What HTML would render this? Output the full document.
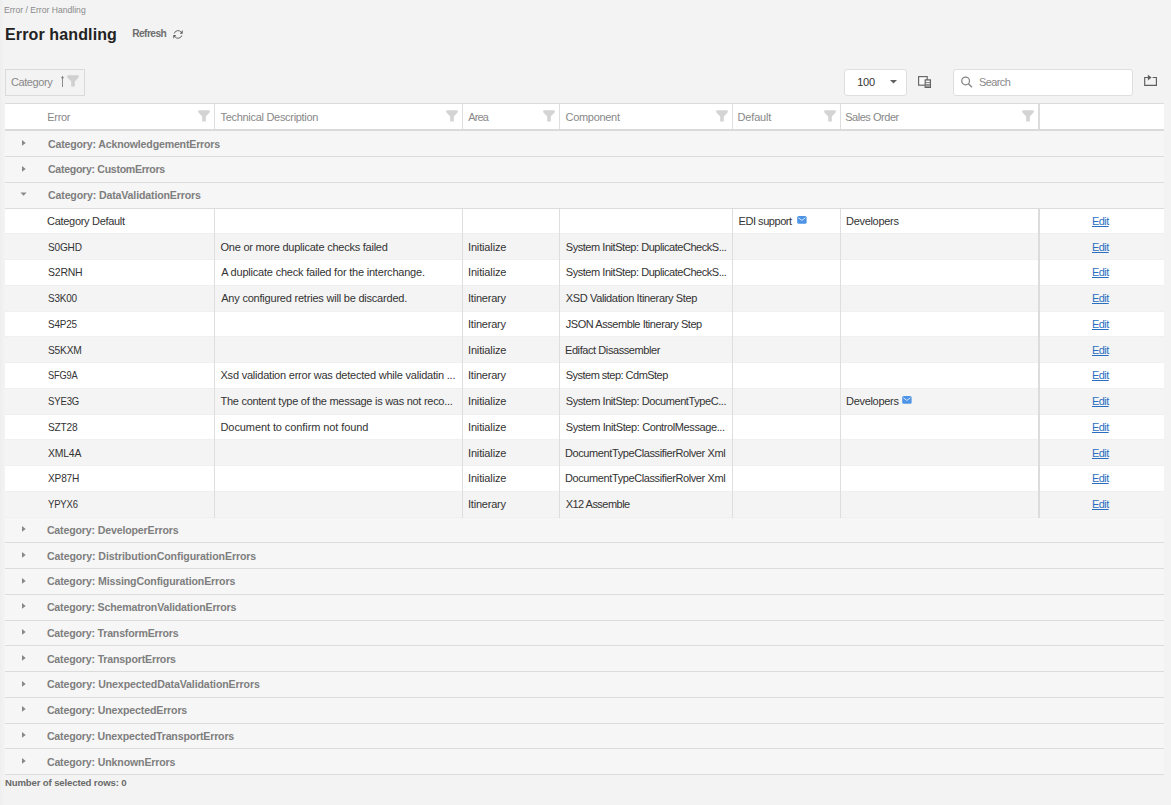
<!DOCTYPE html><html><head><meta charset="utf-8"><title>Error handling</title><style>
*{margin:0;padding:0;box-sizing:border-box}
html,body{width:1171px;height:805px;overflow:hidden;background:#f3f3f3;font-family:"Liberation Sans",sans-serif}
body{position:relative}
.a{position:absolute;white-space:nowrap}
.strip{position:absolute;left:0;top:0;width:4px;height:805px;background:linear-gradient(to right,#ededed 0,#efefef 1px,#f1f1f1 1.5px,#f1f1f1 3px,#f3f3f3 4px)}
.bc{top:4px;font-size:8.6px;color:#8a8a8a;line-height:12px}
.title{top:25px;font-size:16px;font-weight:bold;color:#222;line-height:19px}
.refresh{top:28px;font-size:10.2px;font-weight:bold;color:#6e6e6e;line-height:12px}
.chip{position:absolute;left:5px;top:69px;width:80px;height:27px;border:1px solid #dadada}
.cht{top:76px;font-size:11px;color:#888;line-height:13px}
.dd{position:absolute;left:844px;top:69px;width:63px;height:27px;background:#fff;border:1px solid #dedede;border-radius:3px}
.ddt{top:76px;font-size:11px;color:#333;line-height:12px}
.search{position:absolute;left:953px;top:69px;width:180px;height:27px;background:#fff;border:1px solid #dedede;border-radius:3px}
.st{top:76px;font-size:11px;color:#8a8a8a;line-height:12px}
.fn,.env,.tri{position:absolute}
.hdr{position:absolute;left:5px;top:103px;width:1159px;height:28.25px;background:#fff;border-top:1px solid #dcdcdc;border-bottom:2px solid #dadada}
.vd{position:absolute;background:#dedede;width:1px}
.vd2{position:absolute;background:#dcdcdc;width:2px}
.ht{top:111px;font-size:11px;color:#888;line-height:13px}
.row{position:absolute;left:5px;width:1159px}
.grp{background:#f6f6f6;border-bottom:1px solid #dcdcdc}
.drow{border-bottom:1px solid #f0f0f0}
.gt{font-weight:bold;font-size:10.6px;color:#7e7e7e;line-height:12px}
.dt{font-size:11px;color:#333;line-height:12px}
.edit{font-size:11px;color:#2a6fbf;text-decoration:underline;line-height:12px}
.foot{top:777px;font-size:9.6px;font-weight:bold;color:#6a6a6a;line-height:12px}
</style></head><body>
<div class="strip"></div>
<span class="a bc" style="left:4px;letter-spacing:0px">Error / Error Handling</span>
<span class="a title" style="left:5px;letter-spacing:0.127px">Error handling</span>
<span class="a refresh" style="left:132.2px;letter-spacing:-0.553px">Refresh</span>
<svg class="a" style="left:168px;top:26px" width="20" height="16" viewBox="0 0 20 16"><path d="M6.28 7.44A3.9 3.9 0 0 1 13.2 6.2" stroke="#5c5c5c" stroke-width="0.95" fill="none"/><path d="M14.7 4.1V7.8H11.8Z" fill="#5c5c5c"/><path d="M13.82 9.46A3.9 3.9 0 0 1 6.9 10.6" stroke="#5c5c5c" stroke-width="0.95" fill="none"/><path d="M5.3 9.1H8.1L5.3 12.7Z" fill="#5c5c5c"/></svg>
<div class="chip"></div>
<span class="a cht" style="left:11px;letter-spacing:-0.426px">Category</span>
<svg class="a" style="left:59px;top:74px" width="7" height="14" viewBox="0 0 7 14"><path d="M3.5 3V13" stroke="#808080" stroke-width="0.9"/><path d="M1.9 4.3L3.5 1.8L5.1 4.3Z" fill="#808080"/></svg>
<svg class="fn" style="left:67.2px;top:75.2px" width="12" height="12" viewBox="0 0 12 12"><path d="M0.2 1Q0.2 0.2 1 0.2H11Q11.8 0.2 11.8 1V2.3L7.8 6.6V11.5H4.2V6.6L0.2 2.3Z" fill="#d0d0d0"/></svg>
<div class="dd"></div>
<span class="a ddt" style="left:857.2px;letter-spacing:-0.2px">100</span>
<svg class="a" style="left:890px;top:80px" width="7" height="4" viewBox="0 0 7 4"><path d="M0 0H7L3.5 3.5Z" fill="#606060"/></svg>
<svg class="a" style="left:918px;top:76px" width="14" height="13" viewBox="0 0 14 13"><rect x="0.6" y="0.6" width="8.6" height="8.6" fill="#fbfbfb" stroke="#6a6a6a" stroke-width="1.2"/><rect x="7.2" y="3.9" width="5.2" height="7.5" fill="#f3f3f3" stroke="#606060" stroke-width="1.2"/><path d="M7.6 6.6H12.4M7.6 8.6H12.4" stroke="#7a7a7a" stroke-width="0.9"/><rect x="7.8" y="9" width="4" height="2" fill="#9a9a9a"/></svg>
<div class="search"></div>
<span class="a st" style="left:979px;letter-spacing:-0.6px">Search</span>
<svg class="a" style="left:960px;top:76px" width="13" height="12" viewBox="0 0 13 12"><circle cx="5.6" cy="4.9" r="3.9" stroke="#858585" stroke-width="1.25" fill="none"/><path d="M8.4 7.8L12 11.2" stroke="#858585" stroke-width="1.4"/></svg>
<svg class="a" style="left:1143px;top:74px" width="15" height="13" viewBox="0 0 15 13"><path d="M9.6 3.5H13.4V11.4H1.7V3.5H5.5" stroke="#5e5e5e" stroke-width="1.15" fill="none"/><path d="M4.9 0.8L8.6 3.6L4.9 6.6Z" fill="#5e5e5e"/></svg>
<div class="hdr"></div>
<span class="a ht" style="left:47.28px;letter-spacing:-0.3px">Error</span>
<span class="a ht" style="left:220.5px;letter-spacing:-0.3px">Technical Description</span>
<span class="a ht" style="left:468.3px;letter-spacing:-0.86px">Area</span>
<span class="a ht" style="left:565.5px;letter-spacing:-0.3px">Component</span>
<span class="a ht" style="left:737.54px;letter-spacing:-0.167px">Default</span>
<span class="a ht" style="left:845.2px;letter-spacing:-0.46px">Sales Order</span>
<div class="vd" style="left:214px;top:104px;height:25px"></div>
<svg class="fn" style="left:197.9px;top:110.1px" width="12" height="12" viewBox="0 0 12 12"><path d="M0.2 1Q0.2 0.2 1 0.2H11Q11.8 0.2 11.8 1V2.3L7.8 6.6V11.5H4.2V6.6L0.2 2.3Z" fill="#d4d4d4"/></svg>
<div class="vd" style="left:462px;top:104px;height:25px"></div>
<svg class="fn" style="left:445.9px;top:110.1px" width="12" height="12" viewBox="0 0 12 12"><path d="M0.2 1Q0.2 0.2 1 0.2H11Q11.8 0.2 11.8 1V2.3L7.8 6.6V11.5H4.2V6.6L0.2 2.3Z" fill="#d4d4d4"/></svg>
<div class="vd" style="left:559px;top:104px;height:25px"></div>
<svg class="fn" style="left:542.9px;top:110.1px" width="12" height="12" viewBox="0 0 12 12"><path d="M0.2 1Q0.2 0.2 1 0.2H11Q11.8 0.2 11.8 1V2.3L7.8 6.6V11.5H4.2V6.6L0.2 2.3Z" fill="#d4d4d4"/></svg>
<div class="vd" style="left:732px;top:104px;height:25px"></div>
<svg class="fn" style="left:715.9px;top:110.1px" width="12" height="12" viewBox="0 0 12 12"><path d="M0.2 1Q0.2 0.2 1 0.2H11Q11.8 0.2 11.8 1V2.3L7.8 6.6V11.5H4.2V6.6L0.2 2.3Z" fill="#d4d4d4"/></svg>
<div class="vd" style="left:840px;top:104px;height:25px"></div>
<svg class="fn" style="left:823.9px;top:110.1px" width="12" height="12" viewBox="0 0 12 12"><path d="M0.2 1Q0.2 0.2 1 0.2H11Q11.8 0.2 11.8 1V2.3L7.8 6.6V11.5H4.2V6.6L0.2 2.3Z" fill="#d4d4d4"/></svg>
<div class="vd2" style="left:1038px;top:104px;height:25px"></div>
<svg class="fn" style="left:1022.2px;top:110.1px" width="12" height="12" viewBox="0 0 12 12"><path d="M0.2 1Q0.2 0.2 1 0.2H11Q11.8 0.2 11.8 1V2.3L7.8 6.6V11.5H4.2V6.6L0.2 2.3Z" fill="#d4d4d4"/></svg>
<div class="row grp" style="top:131.25px;height:25.75px"></div>
<svg class="tri" style="left:22px;top:139.75px" width="5" height="8" viewBox="0 0 5 8"><path d="M0 0V5.8L3.7 2.9Z" fill="#888"/></svg>
<span class="a gt" style="left:48px;letter-spacing:-0.173px;top:137.60px">Category: AcknowledgementErrors</span>
<div class="row grp" style="top:157.00px;height:25.75px"></div>
<svg class="tri" style="left:22px;top:165.50px" width="5" height="8" viewBox="0 0 5 8"><path d="M0 0V5.8L3.7 2.9Z" fill="#888"/></svg>
<span class="a gt" style="left:48px;letter-spacing:-0.306px;top:163.35px">Category: CustomErrors</span>
<div class="row grp" style="top:182.75px;height:25.75px"></div>
<svg class="tri" style="left:20px;top:191.95px" width="7" height="5" viewBox="0 0 7 5"><path d="M0.5 0.6H6.6L3.55 3.7Z" fill="#888"/></svg>
<span class="a gt" style="left:48px;letter-spacing:-0.148px;top:189.10px">Category: DataValidationErrors</span>
<div class="row drow" style="top:208.50px;height:25.75px;background:#fff"></div>
<div class="row drow" style="top:234.25px;height:25.75px;background:#f4f4f4"></div>
<div class="row drow" style="top:260.00px;height:25.75px;background:#fff"></div>
<div class="row drow" style="top:285.75px;height:25.75px;background:#f4f4f4"></div>
<div class="row drow" style="top:311.50px;height:25.75px;background:#fff"></div>
<div class="row drow" style="top:337.25px;height:25.75px;background:#f4f4f4"></div>
<div class="row drow" style="top:363.00px;height:25.75px;background:#fff"></div>
<div class="row drow" style="top:388.75px;height:25.75px;background:#f4f4f4"></div>
<div class="row drow" style="top:414.50px;height:25.75px;background:#fff"></div>
<div class="row drow" style="top:440.25px;height:25.75px;background:#f4f4f4"></div>
<div class="row drow" style="top:466.00px;height:25.75px;background:#fff"></div>
<div class="row drow" style="top:491.75px;height:25.75px;background:#f4f4f4"></div>
<span class="a dt" style="left:47.04px;letter-spacing:-0.3px;top:214.85px">Category Default</span>
<span class="a dt" style="left:738.5px;letter-spacing:-0.444px;top:214.85px">EDI support</span>
<svg class="env" style="left:796.5px;top:215.80px" width="10" height="8" viewBox="0 0 10 8"><rect x="0.2" y="0" width="9.4" height="7.8" rx="1.6" fill="#4d93e6"/><path d="M1.4 1.8L4.9 4.4L8.4 1.8" stroke="#eaf2fc" stroke-width="0.9" fill="none"/></svg>
<span class="a dt" style="left:846px;letter-spacing:-0.3px;top:214.85px">Developers</span>
<span class="a edit" style="left:1092px;letter-spacing:-0.573px;top:214.85px">Edit</span>
<span class="a dt" style="left:48px;letter-spacing:-0.2px;transform:scaleX(0.914);transform-origin:0 0;top:240.60px">S0GHD</span>
<span class="a dt" style="left:220.5px;letter-spacing:-0.239px;top:240.60px">One or more duplicate checks failed</span>
<span class="a dt" style="left:468px;letter-spacing:-0.15px;top:240.60px">Initialize</span>
<span class="a dt" style="left:565.8px;letter-spacing:-0.458px;top:240.60px">System InitStep: DuplicateCheckS...</span>
<span class="a edit" style="left:1092px;letter-spacing:-0.573px;top:240.60px">Edit</span>
<span class="a dt" style="left:48px;letter-spacing:-0.2px;transform:scaleX(0.95);transform-origin:0 0;top:266.35px">S2RNH</span>
<span class="a dt" style="left:221.22px;letter-spacing:-0.205px;top:266.35px">A duplicate check failed for the interchange.</span>
<span class="a dt" style="left:468px;letter-spacing:-0.15px;top:266.35px">Initialize</span>
<span class="a dt" style="left:565.8px;letter-spacing:-0.458px;top:266.35px">System InitStep: DuplicateCheckS...</span>
<span class="a edit" style="left:1092px;letter-spacing:-0.573px;top:266.35px">Edit</span>
<span class="a dt" style="left:48px;letter-spacing:-0.2px;transform:scaleX(0.903);transform-origin:0 0;top:292.10px">S3K00</span>
<span class="a dt" style="left:221.22px;letter-spacing:-0.21px;top:292.10px">Any configured retries will be discarded.</span>
<span class="a dt" style="left:468px;letter-spacing:-0.22px;top:292.10px">Itinerary</span>
<span class="a dt" style="left:565.8px;letter-spacing:-0.36px;top:292.10px">XSD Validation Itinerary Step</span>
<span class="a edit" style="left:1092px;letter-spacing:-0.573px;top:292.10px">Edit</span>
<span class="a dt" style="left:48px;letter-spacing:-0.2px;transform:scaleX(0.903);transform-origin:0 0;top:317.85px">S4P25</span>
<span class="a dt" style="left:468px;letter-spacing:-0.22px;top:317.85px">Itinerary</span>
<span class="a dt" style="left:565.8px;letter-spacing:-0.449px;top:317.85px">JSON Assemble Itinerary Step</span>
<span class="a edit" style="left:1092px;letter-spacing:-0.573px;top:317.85px">Edit</span>
<span class="a dt" style="left:48px;letter-spacing:-0.2px;transform:scaleX(0.928);transform-origin:0 0;top:343.60px">S5KXM</span>
<span class="a dt" style="left:468px;letter-spacing:-0.15px;top:343.60px">Initialize</span>
<span class="a dt" style="left:565px;letter-spacing:-0.419px;top:343.60px">Edifact Disassembler</span>
<span class="a edit" style="left:1092px;letter-spacing:-0.573px;top:343.60px">Edit</span>
<span class="a dt" style="left:48px;letter-spacing:-0.2px;transform:scaleX(0.844);transform-origin:0 0;top:369.35px">SFG9A</span>
<span class="a dt" style="left:220.5px;letter-spacing:-0.22px;top:369.35px">Xsd validation error was detected while validatin ...</span>
<span class="a dt" style="left:468px;letter-spacing:-0.22px;top:369.35px">Itinerary</span>
<span class="a dt" style="left:565.8px;letter-spacing:-0.524px;top:369.35px">System step: CdmStep</span>
<span class="a edit" style="left:1092px;letter-spacing:-0.573px;top:369.35px">Edit</span>
<span class="a dt" style="left:48px;letter-spacing:-0.2px;transform:scaleX(0.871);transform-origin:0 0;top:395.10px">SYE3G</span>
<span class="a dt" style="left:220.5px;letter-spacing:-0.275px;top:395.10px">The content type of the message is was not reco...</span>
<span class="a dt" style="left:468px;letter-spacing:-0.15px;top:395.10px">Initialize</span>
<span class="a dt" style="left:565.72px;letter-spacing:-0.42px;top:395.10px">System InitStep: DocumentTypeC...</span>
<span class="a dt" style="left:846px;letter-spacing:-0.3px;top:395.10px">Developers</span>
<svg class="env" style="left:901.8px;top:396.05px" width="10" height="8" viewBox="0 0 10 8"><rect x="0.2" y="0" width="9.4" height="7.8" rx="1.6" fill="#4d93e6"/><path d="M1.4 1.8L4.9 4.4L8.4 1.8" stroke="#eaf2fc" stroke-width="0.9" fill="none"/></svg>
<span class="a edit" style="left:1092px;letter-spacing:-0.573px;top:395.10px">Edit</span>
<span class="a dt" style="left:48px;letter-spacing:-0.2px;transform:scaleX(0.919);transform-origin:0 0;top:420.85px">SZT28</span>
<span class="a dt" style="left:220.5px;letter-spacing:-0.089px;top:420.85px">Document to confirm not found</span>
<span class="a dt" style="left:468px;letter-spacing:-0.15px;top:420.85px">Initialize</span>
<span class="a dt" style="left:565.72px;letter-spacing:-0.396px;top:420.85px">System InitStep: ControlMessage...</span>
<span class="a edit" style="left:1092px;letter-spacing:-0.573px;top:420.85px">Edit</span>
<span class="a dt" style="left:48px;letter-spacing:-0.2px;transform:scaleX(0.947);transform-origin:0 0;top:446.60px">XML4A</span>
<span class="a dt" style="left:468px;letter-spacing:-0.15px;top:446.60px">Initialize</span>
<span class="a dt" style="left:565px;letter-spacing:-0.399px;top:446.60px">DocumentTypeClassifierRolver Xml</span>
<span class="a edit" style="left:1092px;letter-spacing:-0.573px;top:446.60px">Edit</span>
<span class="a dt" style="left:48px;letter-spacing:-0.2px;transform:scaleX(0.921);transform-origin:0 0;top:472.35px">XP87H</span>
<span class="a dt" style="left:468px;letter-spacing:-0.15px;top:472.35px">Initialize</span>
<span class="a dt" style="left:565px;letter-spacing:-0.399px;top:472.35px">DocumentTypeClassifierRolver Xml</span>
<span class="a edit" style="left:1092px;letter-spacing:-0.573px;top:472.35px">Edit</span>
<span class="a dt" style="left:48px;letter-spacing:-0.2px;transform:scaleX(0.863);transform-origin:0 0;top:498.10px">YPYX6</span>
<span class="a dt" style="left:468px;letter-spacing:-0.22px;top:498.10px">Itinerary</span>
<span class="a dt" style="left:565.72px;letter-spacing:-0.535px;top:498.10px">X12 Assemble</span>
<span class="a edit" style="left:1092px;letter-spacing:-0.573px;top:498.10px">Edit</span>
<div class="vd" style="left:214px;top:208.50px;height:309.00px"></div>
<div class="vd" style="left:462px;top:208.50px;height:309.00px"></div>
<div class="vd" style="left:559px;top:208.50px;height:309.00px"></div>
<div class="vd" style="left:732px;top:208.50px;height:309.00px"></div>
<div class="vd" style="left:840px;top:208.50px;height:309.00px"></div>
<div class="vd2" style="left:1038px;top:208.50px;height:309.00px"></div>
<div class="row grp" style="top:517.50px;height:25.75px"></div>
<svg class="tri" style="left:22px;top:526.00px" width="5" height="8" viewBox="0 0 5 8"><path d="M0 0V5.8L3.7 2.9Z" fill="#888"/></svg>
<span class="a gt" style="left:46.88px;letter-spacing:-0.154px;top:523.85px">Category: DeveloperErrors</span>
<div class="row grp" style="top:543.25px;height:25.75px"></div>
<svg class="tri" style="left:22px;top:551.75px" width="5" height="8" viewBox="0 0 5 8"><path d="M0 0V5.8L3.7 2.9Z" fill="#888"/></svg>
<span class="a gt" style="left:46.88px;letter-spacing:-0.092px;top:549.60px">Category: DistributionConfigurationErrors</span>
<div class="row grp" style="top:569.00px;height:25.75px"></div>
<svg class="tri" style="left:22px;top:577.50px" width="5" height="8" viewBox="0 0 5 8"><path d="M0 0V5.8L3.7 2.9Z" fill="#888"/></svg>
<span class="a gt" style="left:46.88px;letter-spacing:-0.132px;top:575.35px">Category: MissingConfigurationErrors</span>
<div class="row grp" style="top:594.75px;height:25.75px"></div>
<svg class="tri" style="left:22px;top:603.25px" width="5" height="8" viewBox="0 0 5 8"><path d="M0 0V5.8L3.7 2.9Z" fill="#888"/></svg>
<span class="a gt" style="left:46.88px;letter-spacing:-0.168px;top:601.10px">Category: SchematronValidationErrors</span>
<div class="row grp" style="top:620.50px;height:25.75px"></div>
<svg class="tri" style="left:22px;top:629.00px" width="5" height="8" viewBox="0 0 5 8"><path d="M0 0V5.8L3.7 2.9Z" fill="#888"/></svg>
<span class="a gt" style="left:46.88px;letter-spacing:-0.177px;top:626.85px">Category: TransformErrors</span>
<div class="row grp" style="top:646.25px;height:25.75px"></div>
<svg class="tri" style="left:22px;top:654.75px" width="5" height="8" viewBox="0 0 5 8"><path d="M0 0V5.8L3.7 2.9Z" fill="#888"/></svg>
<span class="a gt" style="left:46.88px;letter-spacing:-0.163px;top:652.60px">Category: TransportErrors</span>
<div class="row grp" style="top:672.00px;height:25.75px"></div>
<svg class="tri" style="left:22px;top:680.50px" width="5" height="8" viewBox="0 0 5 8"><path d="M0 0V5.8L3.7 2.9Z" fill="#888"/></svg>
<span class="a gt" style="left:46.88px;letter-spacing:-0.109px;top:678.35px">Category: UnexpectedDataValidationErrors</span>
<div class="row grp" style="top:697.75px;height:25.75px"></div>
<svg class="tri" style="left:22px;top:706.25px" width="5" height="8" viewBox="0 0 5 8"><path d="M0 0V5.8L3.7 2.9Z" fill="#888"/></svg>
<span class="a gt" style="left:46.88px;letter-spacing:-0.155px;top:704.10px">Category: UnexpectedErrors</span>
<div class="row grp" style="top:723.50px;height:25.75px"></div>
<svg class="tri" style="left:22px;top:732.00px" width="5" height="8" viewBox="0 0 5 8"><path d="M0 0V5.8L3.7 2.9Z" fill="#888"/></svg>
<span class="a gt" style="left:46.88px;letter-spacing:-0.168px;top:729.85px">Category: UnexpectedTransportErrors</span>
<div class="row grp" style="top:749.25px;height:25.75px"></div>
<svg class="tri" style="left:22px;top:757.75px" width="5" height="8" viewBox="0 0 5 8"><path d="M0 0V5.8L3.7 2.9Z" fill="#888"/></svg>
<span class="a gt" style="left:46.88px;letter-spacing:-0.15px;top:755.60px">Category: UnknownErrors</span>
<span class="a foot" style="left:5px;letter-spacing:-0.15px">Number of selected rows: 0</span>
</body></html>
